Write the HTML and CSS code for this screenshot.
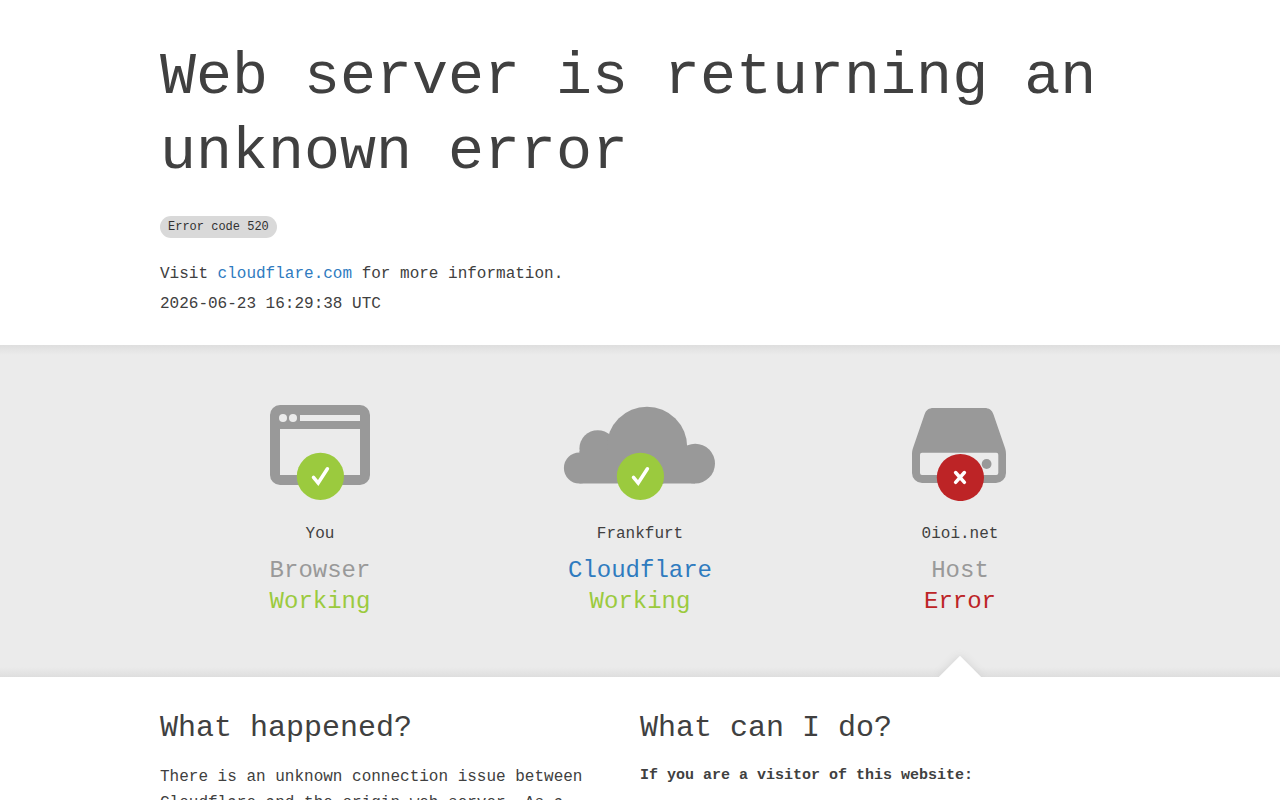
FILE: index.html
```
<!DOCTYPE html>
<html lang="en">
<head>
    <meta charset="UTF-8">
    <meta name="viewport" content="width=device-width, initial-scale=1.0">
    <title>0ioi.net | 520: Web server is returning an unknown error</title>
    <link rel="stylesheet" href="styles.css">
</head>
<body>
    <header class="container error-header">
        <h1>Web server is returning an unknown error</h1>
        <span class="error-code">Error code 520</span>
        <p>Visit <a href="https://www.cloudflare.com/">cloudflare.com</a> for more information.</p>
        <p>2026-06-23 16:29:38 UTC</p>
    </header>

    <section class="status">
        <div class="container status-row">
            <div class="status-item">
                <svg class="status-icon" viewBox="0 0 160 96" aria-hidden="true">
                    <path class="icon-gray" fill-rule="evenodd" d="M40 0H120A10 10 0 0 1 130 10V70A10 10 0 0 1 120 80H40A10 10 0 0 1 30 70V10A10 10 0 0 1 40 0ZM40 24V70H120V24ZM60 10V16H120V10Z"/>
                    <circle class="icon-bg" cx="43" cy="13" r="4"/>
                    <circle class="icon-bg" cx="53" cy="13" r="4"/>
                    <circle class="badge-ok" cx="80.4" cy="71.4" r="23.6"/>
                    <path class="badge-mark" d="M73.5 72.3L78.2 78L87.4 63.8"/>
                </svg>
                <span class="location">You</span>
                <h3 class="name">Browser</h3>
                <span class="state ok">Working</span>
            </div>

            <div class="status-item">
                <svg class="status-icon" viewBox="0 0 160 96" aria-hidden="true">
                    <g class="icon-gray">
                        <circle cx="19.3" cy="63" r="15.4"/>
                        <circle cx="37.7" cy="43.5" r="18.3"/>
                        <circle cx="87" cy="41.9" r="40.2"/>
                        <circle cx="135.2" cy="58.6" r="19.8"/>
                        <path d="M19.5 46H135V78.4H19.5Z"/>
                    </g>
                    <circle class="badge-ok" cx="80.4" cy="71.4" r="23.6"/>
                    <path class="badge-mark" d="M73.5 72.3L78.2 78L87.4 63.8"/>
                </svg>
                <span class="location">Frankfurt</span>
                <h3 class="name"><a href="https://www.cloudflare.com/">Cloudflare</a></h3>
                <span class="state ok">Working</span>
            </div>

            <div class="status-item error-source">
                <svg class="status-icon" viewBox="0 0 160 96" aria-hidden="true">
                    <path class="icon-gray" fill-rule="evenodd" d="M53.5 3H104.5C109 3 112 5 113.5 9.5L125 43C125.8 45.5 126 47 126 50V68A10 10 0 0 1 116 78H42A10 10 0 0 1 32 68V50C32 47 32.2 45.5 33 43L44.5 9.5C46 5 49 3 53.5 3ZM42 47.8A2 2 0 0 0 40 49.8V68A2 2 0 0 0 42 70H116.3A2 2 0 0 0 118.3 68V49.8A2 2 0 0 0 116.3 47.8Z"/>
                    <circle class="icon-gray" cx="106.6" cy="59" r="4.9"/>
                    <circle class="badge-error" cx="80.4" cy="72.5" r="23.6"/>
                    <path class="badge-mark" d="M75.6 67.5L84.4 77.3M84.4 67.5L75.6 77.3"/>
                </svg>
                <span class="location">0ioi.net</span>
                <h3 class="name">Host</h3>
                <span class="state error">Error</span>
            </div>
        </div>
    </section>

    <main class="container details">
        <section class="detail">
            <h2>What happened?</h2>
            <p>There is an unknown connection issue between Cloudflare and the origin web server. As a result, the web page can not be displayed.</p>
        </section>
        <section class="detail">
            <h2>What can I do?</h2>
            <h4>If you are a visitor of this website:</h4>
            <p>Please try again in a few minutes.</p>
        </section>
    </main>
</body>
</html>
```
FILE: styles.css
```
* {
    box-sizing: border-box;
}
body {
    margin: 0;
    background: #fff;
    color: #404040;
    font-family: "Liberation Mono", monospace;
    font-size: 16px;
    line-height: 24px;
}
h1, h2, h3, h4, p {
    margin: 0;
    font-weight: 400;
}
a {
    color: #2f7bbf;
    text-decoration: none;
}
a:hover {
    text-decoration: underline;
}
.container {
    max-width: 960px;
    margin: 0 auto;
}

/* header */
.error-header {
    padding: 40px 0 29px;
}
.error-header h1 {
    margin-bottom: 26px;
    font-size: 60px;
    line-height: 75px;
}
.error-code {
    display: block;
    width: fit-content;
    margin-bottom: 24px;
    padding: 0 8px;
    border-radius: 11px;
    background: #d9d9d9;
    color: #313131;
    font-size: 12px;
    line-height: 22px;
}
.error-header p + p {
    margin-top: 6px;
}

/* status strip */
.status {
    overflow: hidden;
    background: linear-gradient(to bottom, #dedede, #ebebeb 3%, #ebebeb 97%, #dedede);
}
.status-row {
    display: grid;
    grid-template-columns: repeat(3, 1fr);
}
.status-item {
    position: relative;
    display: flex;
    flex-direction: column;
    align-items: center;
    padding: 60px 0;
}
.status-icon {
    width: 160px;
    height: 96px;
    margin-bottom: 21px;
}
.location {
    margin-bottom: 9px;
}
.name, .state {
    font-size: 24px;
    line-height: 31px;
}
.name {
    color: #999;
}
.ok {
    color: #9bca3e;
}
.error {
    color: #bd2426;
}
/* arrow under the failing part */
.error-source::after {
    content: "";
    position: absolute;
    bottom: -15px;
    left: calc(50% - 15px);
    width: 30px;
    height: 30px;
    background: #fff;
    box-shadow: 0 0 8px #d0d0d0;
    transform: rotate(45deg);
}

/* icons */
.icon-gray {
    fill: #999;
}
.icon-bg {
    fill: #ebebeb;
}
.badge-ok {
    fill: #9bca3e;
}
.badge-error {
    fill: #bd2426;
}
.badge-mark {
    fill: none;
    stroke: #fff;
    stroke-width: 3.5;
    stroke-linecap: round;
}

/* explanation columns */
.details {
    display: grid;
    grid-template-columns: 1fr 1fr;
    padding: 31px 0;
}
.detail {
    padding-right: 32px;
}
.detail h2 {
    margin-bottom: 16px;
    font-size: 30px;
    line-height: 40px;
}
.detail h4 {
    margin-bottom: 8px;
    font-size: 15px;
    font-weight: 700;
}
.detail p {
    line-height: 26px;
}
```
